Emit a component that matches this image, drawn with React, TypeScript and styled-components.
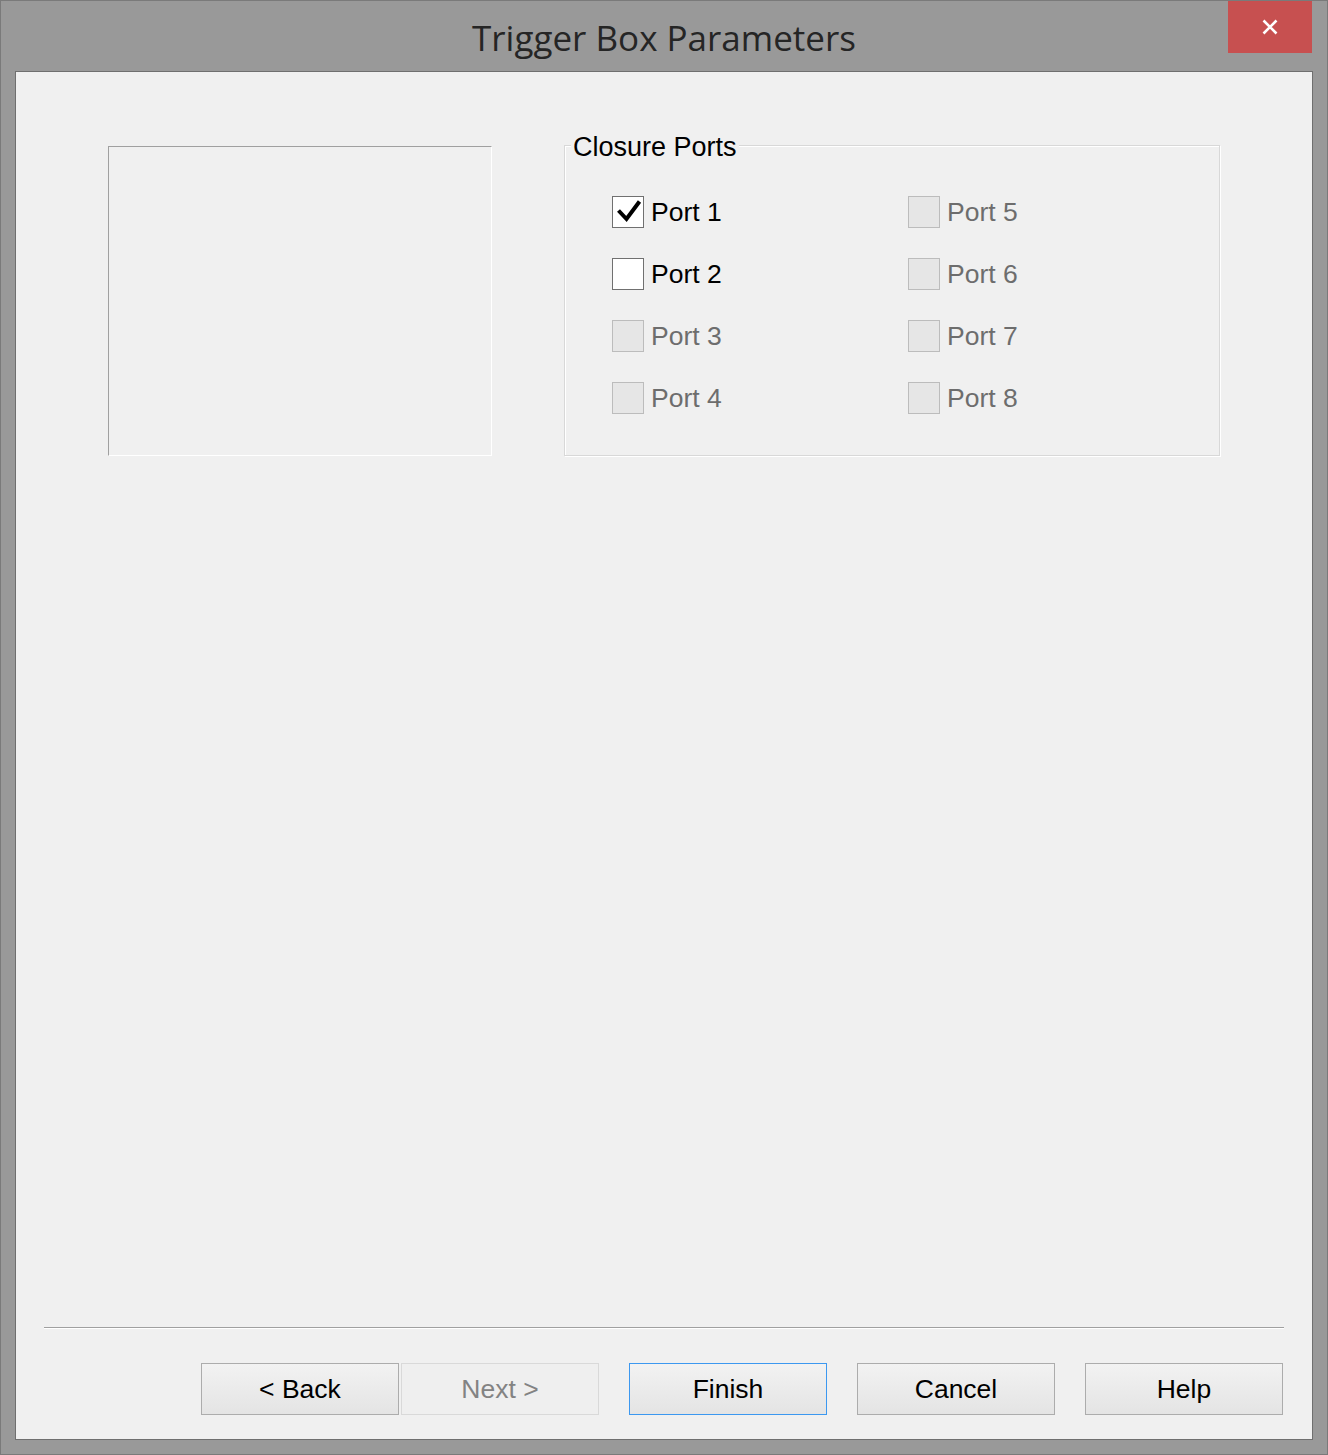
import React from 'react';
import styled, { createGlobalStyle } from 'styled-components';

const GlobalStyle = createGlobalStyle`
  html, body {
    margin: 0;
    padding: 0;
    background: #999999;
  }
  * {
    box-sizing: border-box;
  }
`;

const Window = styled.div`
  position: relative;
  width: 1328px;
  height: 1455px;
  display: flex;
  flex-direction: column;
  background: #999999;
  border: 1px solid #7a7a7a;
  font-family: "Liberation Sans", Arial, sans-serif;
`;

const TitleBar = styled.div`
  height: 70px;
  display: flex;
  justify-content: center;
  padding-top: 14px;
`;

const Title = styled.div`
  font-family: "Open Sans", "Noto Sans", sans-serif;
  font-size: 35px;
  line-height: 46px;
  color: #252525;
`;

const CloseButton = styled.div`
  position: absolute;
  top: 0;
  right: 15px;
  width: 84px;
  height: 52px;
  background: #c75050;
  display: flex;
  align-items: center;
  justify-content: center;
`;

const Client = styled.div`
  flex: 1;
  margin: 0 14px 14px 14px;
  border: 1px solid #6f6f6f;
  background: #f0f0f0;
  display: flex;
  flex-direction: column;
  padding-bottom: 24px;
`;

const TopRow = styled.div`
  display: flex;
  align-items: flex-start;
  gap: 72px;
  padding: 73px 0 0 92px;
`;

const PreviewPanel = styled.div`
  margin-top: 1px;
  width: 384px;
  height: 310px;
  border-top: 1px solid #a0a0a0;
  border-left: 1px solid #a0a0a0;
  border-right: 1px solid #ffffff;
  border-bottom: 1px solid #ffffff;
`;

const GroupBox = styled.div`
  position: relative;
  width: 656px;
  height: 311px;
  border: 1px solid #d8d8d8;
  box-shadow: inset 1px 1px 0 #ffffff, 1px 1px 0 #ffffff;
  padding: 35px 0 0 47px;
`;

const Legend = styled.span`
  position: absolute;
  top: -14px;
  left: 6px;
  padding: 0 2px;
  background: #f0f0f0;
  font-size: 27px;
  line-height: 30px;
  color: #000000;
`;

const PortGrid = styled.div`
  display: grid;
  grid-template-columns: 296px 296px;
  grid-template-rows: repeat(4, 62px);
  grid-auto-flow: column;
`;

const PortRow = styled.label<{ $disabled?: boolean }>`
  display: flex;
  align-items: center;
  gap: 7px;
  font-size: 26.5px;
  color: ${p => (p.$disabled ? '#6d6d6d' : '#000000')};
`;

const Box = styled.span<{ $disabled?: boolean }>`
  width: 32px;
  height: 32px;
  flex: none;
  display: flex;
  align-items: center;
  justify-content: center;
  background: ${p => (p.$disabled ? '#e6e6e6' : '#ffffff')};
  border: 1px solid ${p => (p.$disabled ? '#bcbcbc' : '#707070')};
`;

const Spacer = styled.div`
  flex: 1;
`;

const Separator = styled.div`
  margin: 0 28px;
  height: 2px;
  border-top: 1px solid #a0a0a0;
  border-bottom: 1px solid #ffffff;
`;

const ButtonRow = styled.div`
  display: flex;
  justify-content: flex-end;
  gap: 30px;
  margin-top: 34px;
  padding-right: 29px;
`;

const NavGroup = styled.div`
  display: flex;
  gap: 2px;
`;

const Button = styled.button<{ $focused?: boolean }>`
  width: 198px;
  height: 52px;
  padding: 0;
  font-family: "Liberation Sans", Arial, sans-serif;
  font-size: 26.5px;
  color: #000000;
  background: linear-gradient(#f2f2f2, #e4e4e4);
  border: 1px solid ${p => (p.$focused ? '#3c98f0' : '#acacac')};

  &:disabled {
    color: #838383;
    background: #efefef;
    border-color: #d9d9d9;
  }
`;

type Port = { name: string; checked?: boolean; disabled?: boolean };

const ports: Port[] = [
  { name: 'Port 1', checked: true },
  { name: 'Port 2' },
  { name: 'Port 3', disabled: true },
  { name: 'Port 4', disabled: true },
  { name: 'Port 5', disabled: true },
  { name: 'Port 6', disabled: true },
  { name: 'Port 7', disabled: true },
  { name: 'Port 8', disabled: true },
];

function CheckMark() {
  return (
    <svg width="30" height="30" viewBox="0 0 30 30">
      <path d="M5.5 13.5 L13.5 22 L26.5 4.5" fill="none" stroke="#000" strokeWidth="4" />
    </svg>
  );
}

export default function App() {
  return (
    <>
      <GlobalStyle />
      <Window>
        <TitleBar>
          <Title>Trigger Box Parameters</Title>
        </TitleBar>
        <CloseButton>
          <svg width="16" height="16" viewBox="0 0 16 16">
            <path d="M1.5 1.5 L14.5 14.5 M14.5 1.5 L1.5 14.5" stroke="#fff" strokeWidth="2.6" />
          </svg>
        </CloseButton>
        <Client>
          <TopRow>
            <PreviewPanel />
            <GroupBox>
              <Legend>Closure Ports</Legend>
              <PortGrid>
                {ports.map(p => (
                  <PortRow key={p.name} $disabled={p.disabled}>
                    <Box $disabled={p.disabled}>{p.checked && <CheckMark />}</Box>
                    {p.name}
                  </PortRow>
                ))}
              </PortGrid>
            </GroupBox>
          </TopRow>
          <Spacer />
          <Separator />
          <ButtonRow>
            <NavGroup>
              <Button>&lt; Back</Button>
              <Button disabled>Next &gt;</Button>
            </NavGroup>
            <Button $focused>Finish</Button>
            <Button>Cancel</Button>
            <Button>Help</Button>
          </ButtonRow>
        </Client>
      </Window>
    </>
  );
}
